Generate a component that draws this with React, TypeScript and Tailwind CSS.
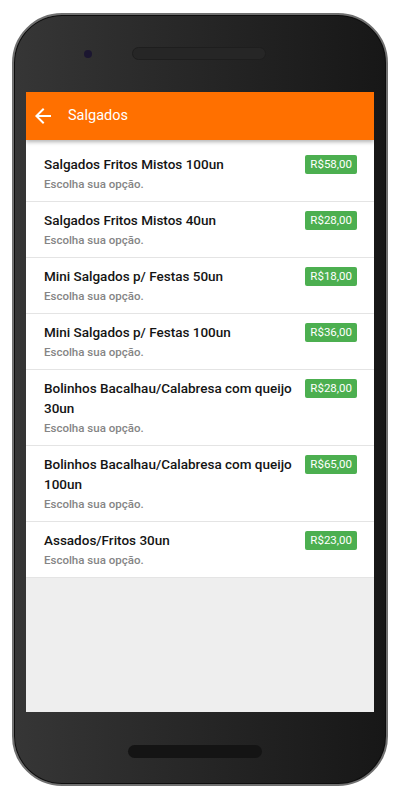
import React from 'react';

interface Produto {
  nome: string;
  preco: string;
}

const PRODUTOS: Produto[] = [
  { nome: 'Salgados Fritos Mistos 100un', preco: 'R$58,00' },
  { nome: 'Salgados Fritos Mistos 40un', preco: 'R$28,00' },
  { nome: 'Mini Salgados p/ Festas 50un', preco: 'R$18,00' },
  { nome: 'Mini Salgados p/ Festas 100un', preco: 'R$36,00' },
  { nome: 'Bolinhos Bacalhau/Calabresa com queijo 30un', preco: 'R$28,00' },
  { nome: 'Bolinhos Bacalhau/Calabresa com queijo 100un', preco: 'R$65,00' },
  { nome: 'Assados/Fritos 30un', preco: 'R$23,00' }
];

const BackArrow = () => (
  <svg width="24" height="24" viewBox="0 0 24 24" fill="white">
    <path d="M20 11H7.83l5.59-5.59L12 4l-8 8 8 8 1.41-1.41L7.83 13H20v-2z" />
  </svg>
);

const ProdutoRow: React.FC<{ item: Produto }> = ({ item }) => (
  <div className="flex items-start justify-between gap-[4px] border-b border-[#e4e4e4] pl-[18px] pr-[17px] pt-2 pb-[7px]">
    <div className="flex flex-col">
      <span className="text-[13.5px] leading-5 font-medium text-[#141414]">{item.nome}</span>
      <span className="text-[11.5px] leading-5 font-medium text-[#858585]">Escolha sua opção.</span>
    </div>
    <span className="mt-[1px] shrink-0 rounded-[2px] bg-[#4caf50] px-[5px] h-[19px] leading-[19px] text-[11.5px] text-white">
      {item.preco}
    </span>
  </div>
);

const App: React.FC = () => {
  return (
    <div className="w-[400px] h-[800px] bg-white pt-[13px] pl-[12px]" style={{ fontFamily: 'Roboto, "Noto Sans", sans-serif' }}>
      <div className="w-[376px] h-[773px] rounded-[50px] border-2 border-[#707070] bg-linear-to-r from-[#363636] to-[#171717] shadow-[inset_0_0_0_1px_#0d0d0d] flex flex-col">
        {/* top bezel */}
        <div className="h-[77px] flex items-start pt-[32px] pl-[70px]">
          <div className="w-[8px] h-[8px] mt-[3px] rounded-full bg-[#1b1630]"></div>
          <div className="ml-[40px] w-[134px] h-[13px] rounded-full bg-[#262626] border border-[#1e1e1e]"></div>
        </div>

        {/* screen */}
        <div className="ml-[12px] w-[348px] h-[620px] bg-[#eeeeee] flex flex-col overflow-hidden">
          <div className="h-[48px] bg-[#ff7000] flex items-center pl-[5px] shadow-[0_2px_4px_rgba(0,0,0,0.3)] relative z-10">
            <BackArrow />
            <span className="ml-[13px] text-[14.5px] text-white">Salgados</span>
          </div>
          <div className="bg-white pt-[6px]">
            {PRODUTOS.map((p, i) => (
              <ProdutoRow key={i} item={p} />
            ))}
          </div>
        </div>

        {/* bottom bezel */}
        <div className="flex-1 flex justify-center pt-[33px] pr-[10px]">
          <div className="w-[134px] h-[13px] rounded-full bg-[#141414]"></div>
        </div>
      </div>
    </div>
  );
};

export default App;
